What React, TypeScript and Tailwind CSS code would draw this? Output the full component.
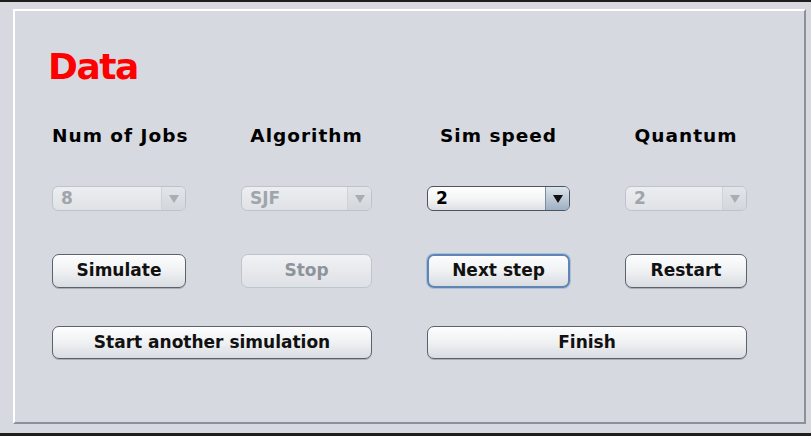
import React from "react";

const font = "font-['DejaVu_Sans',Verdana,sans-serif]";

const Arrow = ({color}: {color: string}) => (
    <svg width="10" height="8" viewBox="0 0 10 8">
        <path d="M0 0 L10 0 L5 8 Z" fill={color}/>
    </svg>
);

const Combo = ({value, disabled = false}: {value: string; disabled?: boolean}) => {
    if (disabled) {
        return (
            <div className="flex h-[25px] w-full overflow-hidden rounded-[6px] border border-[#bec3ca]
                            bg-gradient-to-b from-[#eceef1] to-[#dfe2e6]">
                <span className="flex-1 pl-[8px] text-[17px] leading-[23px] font-bold text-[#a0a4ab]">{value}</span>
                <span className="flex w-[24px] items-center justify-center border-l border-[#cfd3d9]
                                 bg-gradient-to-b from-[#e2e5e9] to-[#d3d7dd]">
                    <Arrow color="#a9adb4"/>
                </span>
            </div>
        );
    }
    return (
        <div className="flex h-[25px] w-full overflow-hidden rounded-[6px] border border-[#4f5560]
                        bg-gradient-to-b from-[#ffffff] via-[#f4f5f6] to-[#dde0e4]
                        shadow-[inset_0_1px_0_#ffffff]">
            <span className="flex-1 pl-[8px] text-[17px] leading-[23px] font-bold text-black">{value}</span>
            <span className="flex w-[24px] items-center justify-center border-l border-[#7d8a99]
                             bg-gradient-to-b from-[#dde4ec] to-[#9fb0c3]">
                <Arrow color="#111111"/>
            </span>
        </div>
    );
};

const Button = ({label, disabled = false, focused = false, h = "h-[34px]"}: {
    label: string; disabled?: boolean; focused?: boolean; h?: string
}) => {
    if (disabled) {
        return (
            <div className={`${h} flex items-center justify-center rounded-[7px] border border-[#c0c4cb]
                            bg-gradient-to-b from-[#f1f2f4] to-[#dde0e5] text-[17px] font-bold text-[#8f939a]`}>
                {label}
            </div>
        );
    }
    return (
        <div className={`${h} flex items-center justify-center rounded-[7px]
                        ${focused
                            ? "border-2 border-[#5f86b3] shadow-[0_0_0_1px_#a9bfdb,inset_0_1px_0_#ffffff]"
                            : "border border-[#5c626b] shadow-[0_1px_0_#a9aeb6,inset_0_1px_0_#ffffff]"}
                        bg-gradient-to-b from-[#fdfdfe] via-[#eff1f3] to-[#d9dce1]
                        text-[17px] font-bold text-[#111]`}>
            {label}
        </div>
    );
};

const cols = "grid grid-cols-[134px_131px_143px_122px] gap-x-[55px]";

export default function App() {
    return (
        <div className={`${font} w-[811px] h-[436px] bg-[#d6d9df] border-t-2 border-b-[3px] border-[#1e1e1e]
                         pt-[7px] pl-[13px] pr-[5px] pb-[9px]`}>
            <div className="h-full border-2 border-t-white border-l-white border-r-[#8c9199] border-b-[#8c9199]
                            pl-[37px] pt-[38px]">
                <div className="text-[36px] leading-[36px] font-bold tracking-[-1.5px] text-[#ff0000] -ml-[4px]">
                    Data
                </div>

                <div className={`${cols} mt-[42px]`}>
                    {["Num of Jobs", "Algorithm", "Sim speed", "Quantum"].map((t) => (
                        <div key={t} className="text-center text-[18.5px] leading-[18px] font-bold tracking-[1px] text-black whitespace-nowrap">
                            {t}
                        </div>
                    ))}
                </div>

                <div className={`${cols} mt-[41px]`}>
                    <Combo value="8" disabled/>
                    <Combo value="SJF" disabled/>
                    <Combo value="2"/>
                    <Combo value="2" disabled/>
                </div>

                <div className={`${cols} mt-[43px]`}>
                    <Button label="Simulate"/>
                    <Button label="Stop" disabled/>
                    <Button label="Next step" focused/>
                    <Button label="Restart"/>
                </div>

                <div className={`${cols} mt-[38px]`}>
                    <div className="col-span-2"><Button label="Start another simulation" h="h-[33px]"/></div>
                    <div className="col-span-2"><Button label="Finish" h="h-[33px]"/></div>
                </div>
            </div>
        </div>
    );
}
